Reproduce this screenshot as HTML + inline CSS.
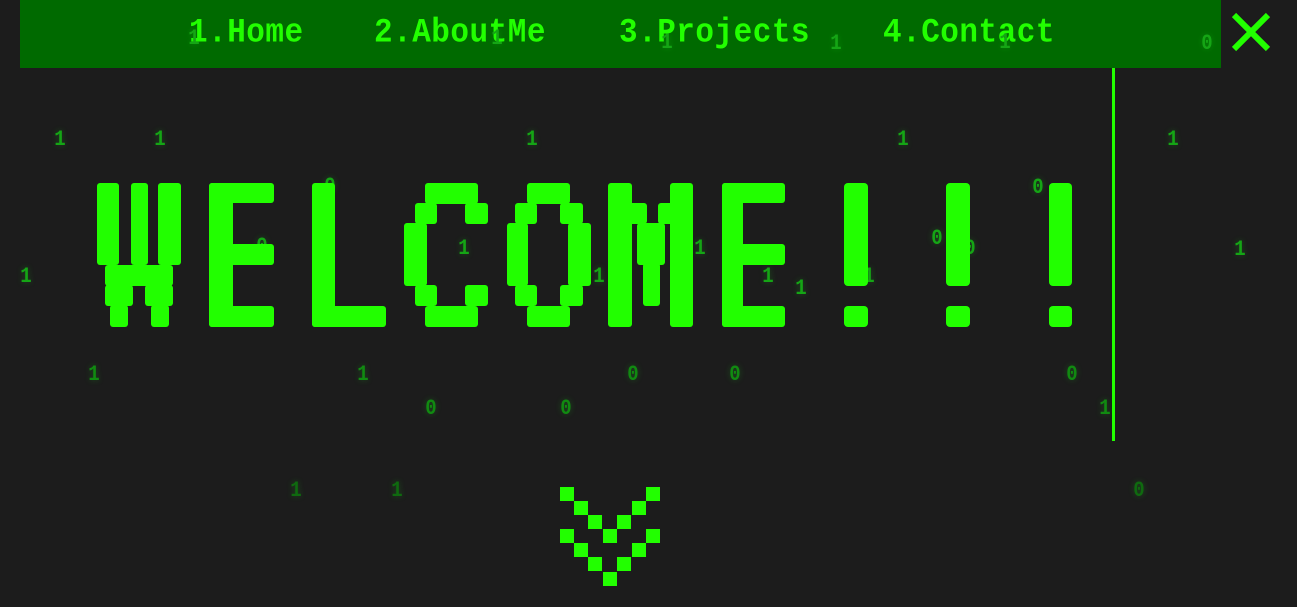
<!DOCTYPE html>
<html><head><meta charset="utf-8"><style>
html,body{margin:0;padding:0;}
body{width:1297px;height:607px;background:#1c1c1c;position:relative;overflow:hidden;font-family:"Liberation Mono",monospace;}
.nav{position:absolute;left:20px;top:0;width:1201px;height:68px;background:#006a00;}
.ni{position:absolute;top:14px;color:#22ff00;font-size:31px;font-weight:bold;line-height:40px;transform:scaleY(1.1);letter-spacing:0.5px;white-space:nowrap;}
.d{position:absolute;font-size:19px;line-height:20px;font-weight:bold;transform:translate(-50%,-50%) scaleY(1.15);text-shadow:0 0 6px rgba(30,200,30,.3);}
.a{color:#15a515;}.b{color:#118a11;}.c{color:#0f6a0f;}
</style></head><body>
<div class="nav"></div>
<div class="ni" style="left:189px">1.Home</div>
<div class="ni" style="left:374px">2.AboutMe</div>
<div class="ni" style="left:619px">3.Projects</div>
<div class="ni" style="left:883px">4.Contact</div>
<svg style="position:absolute;left:1230px;top:11px" width="44" height="44"><path d="M4 4L38 38M38 4L4 38" stroke="#22ff00" stroke-width="6"/></svg>
<div style="position:absolute;left:1112px;top:68px;width:3px;height:373px;background:#22ff00"></div>

<div class="d a" style="left:194px;top:38px">1</div>
<div class="d a" style="left:497px;top:38px">1</div>
<div class="d a" style="left:667px;top:42px">1</div>
<div class="d a" style="left:836px;top:43px">1</div>
<div class="d a" style="left:1005px;top:42px">1</div>
<div class="d a" style="left:1207px;top:43px">0</div>
<div class="d a" style="left:60px;top:139px">1</div>
<div class="d a" style="left:160px;top:139px">1</div>
<div class="d a" style="left:532px;top:139px">1</div>
<div class="d a" style="left:903px;top:139px">1</div>
<div class="d a" style="left:1173px;top:139px">1</div>
<div class="d a" style="left:330px;top:186px">0</div>
<div class="d a" style="left:1038px;top:187px">0</div>
<div class="d a" style="left:262px;top:246px">0</div>
<div class="d a" style="left:464px;top:248px">1</div>
<div class="d a" style="left:700px;top:248px">1</div>
<div class="d a" style="left:937px;top:238px">0</div>
<div class="d a" style="left:970px;top:248px">0</div>
<div class="d a" style="left:1240px;top:249px">1</div>
<div class="d a" style="left:26px;top:276px">1</div>
<div class="d a" style="left:599px;top:276px">1</div>
<div class="d a" style="left:768px;top:276px">1</div>
<div class="d a" style="left:869px;top:276px">1</div>
<div class="d a" style="left:801px;top:288px">1</div>
<div class="d b" style="left:94px;top:374px">1</div>
<div class="d b" style="left:363px;top:374px">1</div>
<div class="d b" style="left:633px;top:374px">0</div>
<div class="d b" style="left:735px;top:374px">0</div>
<div class="d b" style="left:1072px;top:374px">0</div>
<div class="d b" style="left:431px;top:408px">0</div>
<div class="d b" style="left:566px;top:408px">0</div>
<div class="d b" style="left:1105px;top:408px">1</div>
<div class="d c" style="left:296px;top:490px">1</div>
<div class="d c" style="left:397px;top:490px">1</div>
<div class="d c" style="left:1139px;top:490px">0</div>

<svg style="position:absolute;left:0;top:0" width="1297" height="607">
<g fill="#22ff00">
<rect x="97" y="183" width="22" height="82" rx="3"/>
<rect x="131" y="183" width="17" height="82" rx="3"/>
<rect x="158" y="183" width="23" height="82" rx="3"/>
<rect x="105" y="265" width="48" height="21" rx="3"/>
<rect x="145" y="265" width="28" height="21" rx="3"/>
<rect x="105" y="285" width="28" height="21" rx="3"/>
<rect x="145" y="285" width="28" height="21" rx="3"/>
<rect x="110" y="305" width="18" height="22" rx="3"/>
<rect x="151" y="305" width="18" height="22" rx="3"/>
<rect x="209" y="183" width="24" height="144" rx="3"/>
<rect x="209" y="183" width="65" height="20" rx="3"/>
<rect x="209" y="244" width="65" height="21" rx="3"/>
<rect x="209" y="306" width="65" height="21" rx="3"/>
<rect x="312" y="183" width="23" height="144" rx="3"/>
<rect x="312" y="306" width="74" height="21" rx="3"/>
<rect x="425" y="183" width="53" height="21" rx="3"/>
<rect x="415" y="203" width="22" height="21" rx="3"/>
<rect x="465" y="203" width="23" height="21" rx="3"/>
<rect x="404" y="223" width="23" height="63" rx="3"/>
<rect x="415" y="285" width="22" height="21" rx="3"/>
<rect x="465" y="285" width="23" height="21" rx="3"/>
<rect x="425" y="306" width="53" height="21" rx="3"/>
<rect x="527" y="183" width="43" height="21" rx="3"/>
<rect x="515" y="203" width="22" height="21" rx="3"/>
<rect x="560" y="203" width="23" height="21" rx="3"/>
<rect x="507" y="223" width="21" height="63" rx="3"/>
<rect x="568" y="223" width="23" height="63" rx="3"/>
<rect x="515" y="285" width="22" height="21" rx="3"/>
<rect x="560" y="285" width="23" height="21" rx="3"/>
<rect x="527" y="306" width="43" height="21" rx="3"/>
<rect x="608" y="183" width="24" height="144" rx="3"/>
<rect x="670" y="183" width="23" height="144" rx="3"/>
<rect x="628" y="203" width="19" height="21" rx="3"/>
<rect x="658" y="203" width="16" height="21" rx="3"/>
<rect x="637" y="223" width="28" height="42" rx="3"/>
<rect x="643" y="263" width="17" height="43" rx="3"/>
<rect x="722" y="183" width="21" height="144" rx="3"/>
<rect x="722" y="183" width="63" height="20" rx="3"/>
<rect x="722" y="244" width="63" height="21" rx="3"/>
<rect x="722" y="306" width="63" height="21" rx="3"/>
<rect x="844" y="183" width="24" height="103" rx="4"/>
<rect x="844" y="306" width="24" height="21" rx="4"/>
<rect x="946" y="183" width="24" height="103" rx="4"/>
<rect x="946" y="306" width="24" height="21" rx="4"/>
<rect x="1049" y="183" width="23" height="103" rx="4"/>
<rect x="1049" y="306" width="23" height="21" rx="4"/>
</g>
<g fill="#22ff00">
<rect x="560" y="487" width="14" height="14"/><rect x="646" y="487" width="14" height="14"/>
<rect x="574" y="501" width="14" height="14"/><rect x="632" y="501" width="14" height="14"/>
<rect x="588" y="515" width="14" height="14"/><rect x="617" y="515" width="14" height="14"/>
<rect x="560" y="529" width="14" height="14"/><rect x="603" y="529" width="14" height="14"/><rect x="646" y="529" width="14" height="14"/>
<rect x="574" y="543" width="14" height="14"/><rect x="632" y="543" width="14" height="14"/>
<rect x="588" y="557" width="14" height="14"/><rect x="617" y="557" width="14" height="14"/>
<rect x="603" y="572" width="14" height="14"/>
</g>
</svg>
</body></html>
